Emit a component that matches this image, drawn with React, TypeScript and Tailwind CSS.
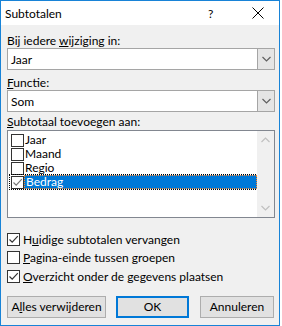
import { ReactNode } from 'react';

const Chevron = ({ up = false, color = '#606060' }: { up?: boolean; color?: string }) => (
  <svg width="9" height="6" viewBox="0 0 9 6" className={up ? 'rotate-180' : ''}>
    <path d="M0.5 1 L4.5 5 L8.5 1" fill="none" stroke={color} strokeWidth="1.2" />
  </svg>
);

const Check = ({ checked = false, color = '#333' }: { checked?: boolean; color?: string }) => (
  <div className="w-[13px] h-[13px] shrink-0 bg-white border border-[#333] flex items-center justify-center">
    {checked && (
      <svg width="11" height="11" viewBox="0 0 11 11">
        <path d="M1.5 5.5 L4.2 8.2 L9.8 2.2" fill="none" stroke={color} strokeWidth="1.2" />
      </svg>
    )}
  </div>
);

const Combo = ({ value }: { value: string }) => (
  <div className="h-[22px] flex border border-[#a5a5a5] bg-white">
    <div className="flex-1 flex items-center pl-[3px]">{value}</div>
    <div className="w-[17px] border-l border-[#a5a5a5] bg-[#e5e5e5] flex items-center justify-center">
      <Chevron />
    </div>
  </div>
);

const Option = ({ checked, children }: { checked?: boolean; children: ReactNode }) => (
  <div className="h-[18.5px] flex items-center gap-[3px]">
    <Check checked={checked} />
    <span>{children}</span>
  </div>
);

const Btn = ({ children, primary = false, w }: { children: ReactNode; primary?: boolean; w: string }) => (
  <button
    className={`${w} h-[22px] bg-[#e1e1e1] flex items-center justify-center ${
      primary ? 'border-2 border-[#0078d7]' : 'border border-[#adadad]'
    }`}
  >
    {children}
  </button>
);

export default function App() {
  const items = ['Jaar', 'Maand', 'Regio'];
  return (
    <div
      className="w-[282px] h-[326px] bg-white text-[12px] leading-[15px] text-black"
      style={{ fontFamily: 'Lato, sans-serif' }}
    >
      <div className="w-[280px] h-[326px] border border-[#1883d7] flex flex-col">
        {/* title bar */}
        <div className="h-[24px] bg-white flex items-center pl-[4px] shrink-0">
          <span className="flex-1">Subtotalen</span>
          <span className="w-[10px] mr-[34px]">?</span>
          <svg width="12" height="12" viewBox="0 0 12 12" className="mr-[15px]">
            <path d="M0.5 0.5 L11.5 11.5 M11.5 0.5 L0.5 11.5" stroke="#000" strokeWidth="1" />
          </svg>
        </div>

        {/* body */}
        <div className="flex-1 bg-[#f0f0f0] pl-[6px] pr-[4px] pt-[8px] flex flex-col">
          <div className="h-[15px]">
            Bij iedere <u>w</u>ijziging in:
          </div>
          <Combo value="Jaar" />
          <div className="h-[15px] mt-[5px]">
            <u>F</u>unctie:
          </div>
          <Combo value="Som" />
          <div className="h-[15px] mt-[2px] mb-[1px]">
            <u>S</u>ubtotaal toevoegen aan:
          </div>

          {/* list box */}
          <div className="h-[88px] border border-[#828790] bg-white flex">
            <div className="flex-1 pt-[2px] pl-[2px] flex flex-col leading-[14px]">
              {items.map((it) => (
                <div key={it} className="h-[14px] flex items-center">
                  <div className="ml-[1px]">
                    <Check />
                  </div>
                  <span className="pl-[1px]">{it}</span>
                </div>
              ))}
              <div className="h-[14px] flex items-center outline outline-1 outline-dotted outline-[#000]">
                <div className="ml-[1px]">
                  <Check checked color="#777" />
                </div>
                <span className="flex-1 h-[14px] pl-[1px] bg-[#0078d7] text-white border border-dotted border-[#ff8728] leading-[12px]">
                  Bedrag
                </span>
              </div>
            </div>
            <div className="w-[17px] bg-[#f0f0f0] flex flex-col items-center justify-between py-[6px]">
              <Chevron up color="#c0c0c0" />
              <Chevron color="#c0c0c0" />
            </div>
          </div>

          <div className="mt-[12px] flex flex-col">
            <Option checked>
              H<u>u</u>idige subtotalen vervangen
            </Option>
            <Option>
              <u>P</u>agina-einde tussen groepen
            </Option>
            <Option checked>
              <u>O</u>verzicht onder de gegevens plaatsen
            </Option>
          </div>

          <div className="mt-[10px] flex">
            <Btn w="w-[99px]">
              A<u>l</u>les verwijderen
            </Btn>
            <div className="w-[10px]" />
            <Btn w="w-[73px]" primary>
              OK
            </Btn>
            <div className="w-[11px]" />
            <Btn w="w-[74px]">Annuleren</Btn>
          </div>
        </div>
      </div>
    </div>
  );
}
